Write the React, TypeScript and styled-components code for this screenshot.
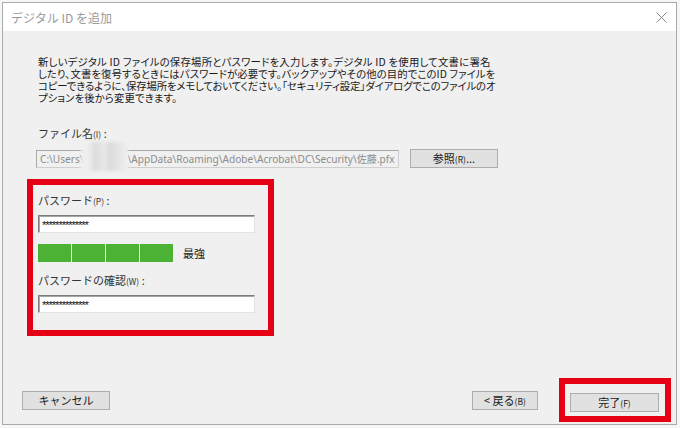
import React from 'react'
import styled, { createGlobalStyle } from 'styled-components'

const GlobalStyle = createGlobalStyle`
  html, body {
    margin: 0;
    padding: 0;
    background: #f6f6f6;
  }
  body {
    font-family: "Noto Sans CJK JP", "Noto Sans", sans-serif;
    color: #1a1a1a;
  }
`

const Window = styled.div`
  box-sizing: border-box;
  width: 675px;
  height: 423px;
  margin: 2px 0 0 2px;
  border: 1px solid #a9a9a9;
  background: #f0f0f0;
  display: flex;
  flex-direction: column;
`
const TitleBar = styled.div`
  height: 28px;
  background: #fff;
  display: flex;
  align-items: center;
  padding: 0 9px 0 8px;
  flex-shrink: 0;
`
const Title = styled.span`
  font-size: 12px;
  color: #9a9a9a;
  margin-right: auto;
`
const Content = styled.div`
  flex: 1;
  display: flex;
  flex-direction: column;
  padding: 0 0 2px 0;
`
const Intro = styled.div`
  margin: 25px 0 0 35px;
  font-size: 10.4px;
  font-feature-settings: "palt";
  white-space: nowrap;
`
const IntroLine = styled.div`
  height: 12px;
  line-height: 12px;
  letter-spacing: ${(p: { $ls: number }) => p.$ls}px;
`
const Label = styled.div`
  font-size: 11px;
  line-height: 14px;
  color: #333;
  margin-top: ${(p: { $top: number }) => p.$top}px;
`
const Key = styled.span`
  font-size: 8.5px;
`
const FileRow = styled.div`
  display: flex;
  align-items: center;
  margin: 8px 0 0 33px;
`
const FileField = styled.div`
  box-sizing: border-box;
  width: 363px;
  height: 18px;
  border: 1px solid #cfcfcf;
  border-top-color: #a8a8a8;
  border-left-color: #a8a8a8;
  background: #f0f0f0;
  color: #8c8c8c;
  font-family: "Noto Sans", "Noto Sans CJK JP", sans-serif;
  font-size: 10.1px;
  line-height: 16px;
  padding-left: 3px;
  white-space: nowrap;
  overflow: visible;
`
const Redacted = styled.span`
  display: inline-block;
  position: relative;
  width: 44px;
  height: 10px;
  &::before {
    content: '';
    position: absolute;
    left: -3px;
    right: 0;
    top: -11px;
    bottom: -8px;
    background: linear-gradient(90deg, #efefef 0 14%, #e3e3e3 24%, #dcdcdc 32%, #e8e8e8 48%, #dadada 62%, #e4e4e4 78%, #efefef 100%);
    filter: blur(1.5px);
  }
`
const Button = styled.button`
  box-sizing: border-box;
  width: ${(p: { $w: number }) => p.$w}px;
  height: 19px;
  border: 1px solid #adadad;
  background: #e1e1e1;
  font-family: "Noto Sans CJK JP", sans-serif;
  font-size: 11px;
  color: #1a1a1a;
  padding: 0;
  line-height: 17px;
`
const BrowseButton = styled(Button)`
  margin-left: 11px;
`
const RedBox = styled.div`
  box-sizing: border-box;
  width: 247px;
  height: 157px;
  margin: 11px 0 0 24px;
  border: 6px solid #e60014;
  padding: 0 0 0 5px;
`
const PassInput = styled.div`
  box-sizing: border-box;
  width: 217px;
  height: 18px;
  margin-top: 7px;
  background: #fff;
  border: 1px solid #e3e3e3;
  border-top-color: #7d7d7d;
  border-left-color: #7d7d7d;
  box-shadow: inset 1px 1px 0 #a5a5a5;
  font-family: "Liberation Sans", sans-serif;
  font-size: 11.5px;
  line-height: 19px;
  padding-left: 3px;
  letter-spacing: -1.2px;
  color: #222;
`
const StrengthRow = styled.div`
  display: flex;
  align-items: center;
  margin-top: 11px;
`
const Segments = styled.div`
  display: flex;
  gap: 1px;
`
const Segment = styled.div`
  width: 33px;
  height: 18px;
  background: #4cb236;
`
const StrengthText = styled.span`
  margin-left: 10px;
  font-size: 11px;
  color: #222;
`
const Footer = styled.div`
  margin-top: auto;
  display: flex;
  align-items: center;
  padding-left: 19px;
`
const BackButton = styled(Button)`
  margin-left: auto;
`
const Highlight = styled.div`
  box-sizing: border-box;
  margin: 0 5px 0 21px;
  border: 6px solid #e60014;
  padding: 4px 6px 4px 5px;
`

const introLines = [
  { text: '新しいデジタル ID ファイルの保存場所とパスワードを入力します。デジタル ID を使用して文書に署名', ls: 0.22 },
  { text: 'したり、文書を復号するときにはパスワードが必要です。バックアップやその他の目的でこのID ファイルを', ls: 0.08 },
  { text: 'コピーできるように、保存場所をメモしておいてください。「セキュリティ設定」ダイアログでこのファイルのオ', ls: -0.15 },
  { text: 'プションを後から変更できます。', ls: 0.1 },
]

export default function App() {
  return (
    <>
      <GlobalStyle />
      <Window>
        <TitleBar>
          <Title>デジタル ID を追加</Title>
          <svg width="11" height="11" viewBox="0 0 11 11">
            <path d="M0.5 0.5 L10.5 10.5 M10.5 0.5 L0.5 10.5" stroke="#8a8a8a" strokeWidth="1" />
          </svg>
        </TitleBar>
        <Content>
          <Intro>
            {introLines.map(l => (
              <IntroLine key={l.text} $ls={l.ls}>{l.text}</IntroLine>
            ))}
          </Intro>
          <Label $top={22} style={{ marginLeft: 35 }}>
            ファイル名<Key>(I)</Key> :
          </Label>
          <FileRow>
            <FileField>
              C:\Users\<Redacted />\AppData\Roaming\Adobe\Acrobat\DC\Security\佐藤.pfx
            </FileField>
            <BrowseButton $w={88}>参照<Key>(R)</Key>...</BrowseButton>
          </FileRow>
          <RedBox>
            <Label $top={8}>
              パスワード<Key>(P)</Key> :
            </Label>
            <PassInput>**************</PassInput>
            <StrengthRow>
              <Segments>
                <Segment />
                <Segment />
                <Segment />
                <Segment />
              </Segments>
              <StrengthText>最強</StrengthText>
            </StrengthRow>
            <Label $top={11}>
              パスワードの確認<Key>(W)</Key> :
            </Label>
            <PassInput>**************</PassInput>
          </RedBox>
          <Footer>
            <Button $w={88}>キャンセル</Button>
            <BackButton $w={66}>&lt; 戻る<Key>(B)</Key></BackButton>
            <Highlight>
              <Button $w={89}>完了<Key>(F)</Key></Button>
            </Highlight>
          </Footer>
        </Content>
      </Window>
    </>
  )
}
